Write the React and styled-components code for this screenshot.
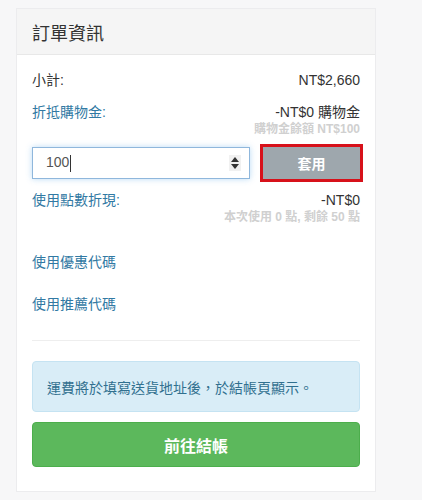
import styled, { createGlobalStyle } from "styled-components";

const Global = createGlobalStyle`
body{
margin:0;
background:#f7f7f8;
font-family:"Liberation Sans","Noto Sans CJK TC",sans-serif;
font-size:14px;
color:#333;
}
`;

const Page = styled.div`
padding:8px 0 0 16px;
height:500px;
box-sizing:border-box;
`;

const Panel = styled.div`
width:360px;
box-sizing:border-box;
background:#fff;
border:1px solid #ececee;
`;

const Heading = styled.div`
height:46px;
box-sizing:border-box;
background:#f5f5f5;
border-bottom:1px solid #e8e8e8;
padding:0 15px;
display:flex;
align-items:center;
font-size:18px;
color:#333;
`;

const Body = styled.div`
padding:15px 15px 24px;
`;

const Row = styled.div`
display:flex;
justify-content:space-between;
line-height:20px;
margin-top:${p => p.$top || 0}px;
`;

const Label = styled.span`
color:${p => (p.$link ? "#3179a3" : "#333")};
`;

const Note = styled.div`
text-align:right;
font-size:12px;
font-weight:bold;
color:#d0d0d0;
line-height:12px;
margin-top:1px;
`;

const ApplyRow = styled.div`
display:flex;
align-items:center;
gap:13px;
margin:12px 0 11px;
`;

const Input = styled.div`
width:218px;
height:32px;
box-sizing:border-box;
border:1px solid #8fb7dc;
box-shadow:0 0 6px rgba(102,175,233,0.45);
display:flex;
align-items:center;
justify-content:space-between;
padding:0 8px 0 13px;
font-size:14px;
color:#555;
`;

const Caret = styled.span`
display:inline-block;
width:1px;
height:17px;
background:#333;
vertical-align:middle;
margin-left:1px;
`;

const Spinner = styled.span`
display:flex;
flex-direction:column;
align-items:center;
justify-content:center;
gap:2px;
width:12px;
height:16px;
background:#f1f1f1;
`;

const GrayButton = styled.div`
width:97px;
height:32px;
background:#9ea7ad;
outline:3px solid #d7111a;
color:#fff;
display:flex;
align-items:center;
justify-content:center;
font-size:14px;
font-weight:bold;
`;

const Link = styled.div`
color:#3179a3;
line-height:20px;
margin-top:${p => p.$top}px;
`;

const Divider = styled.div`
height:1px;
background:#eee;
margin:26px 0 20px;
`;

const Alert = styled.div`
background:#d9edf7;
border:1px solid #c5e3f2;
border-radius:4px;
color:#31708f;
height:51px;
box-sizing:border-box;
padding:0 14px;
display:flex;
align-items:center;
font-size:14px;
`;

const Checkout = styled.div`
margin-top:10px;
height:45px;
border-radius:4px;
background:#5cb85c;
border:1px solid #4cae4c;
box-sizing:border-box;
color:#fff;
font-size:16px;
font-weight:bold;
display:flex;
align-items:center;
justify-content:center;
`;

const App = () => (
  <Page>
    <Global />
    <Panel>
      <Heading>訂單資訊</Heading>
      <Body>
        <Row>
          <Label>小計:</Label>
          <span>NT$2,660</span>
        </Row>
        <Row $top={12}>
          <Label $link>折抵購物金:</Label>
          <span>-NT$0 購物金</span>
        </Row>
        <Note>購物金餘額 NT$100</Note>
        <ApplyRow>
          <Input>
            <span>100<Caret /></span>
            <Spinner>
              <svg width="8" height="5" viewBox="0 0 8 5"><path d="M0 5L4 0L8 5Z" fill="#333" /></svg>
              <svg width="8" height="5" viewBox="0 0 8 5"><path d="M0 0L4 5L8 0Z" fill="#333" /></svg>
            </Spinner>
          </Input>
          <GrayButton>套用</GrayButton>
        </ApplyRow>
        <Row>
          <Label $link>使用點數折現:</Label>
          <span>-NT$0</span>
        </Row>
        <Note>本次使用 0 點, 剩餘 50 點</Note>
        <Link $top={29}>使用優惠代碼</Link>
        <Link $top={22}>使用推薦代碼</Link>
        <Divider />
        <Alert>運費將於填寫送貨地址後，於結帳頁顯示。</Alert>
        <Checkout>前往結帳</Checkout>
      </Body>
    </Panel>
  </Page>
);

export default App;
